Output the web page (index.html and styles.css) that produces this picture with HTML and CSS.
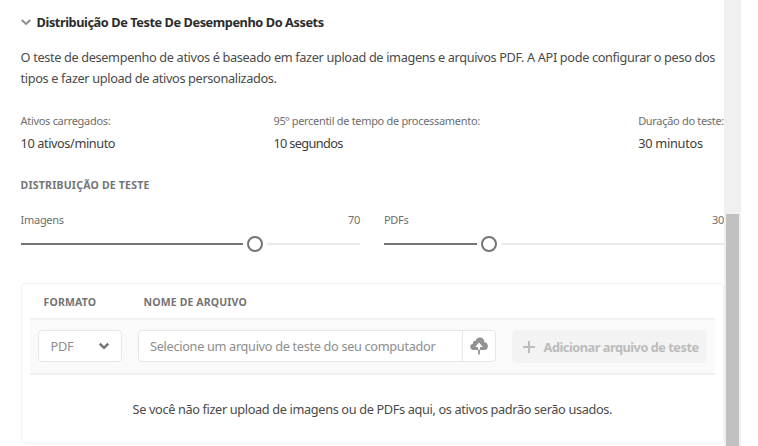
FILE: index.html
```html
<!DOCTYPE html>
<html lang="pt">
<head>
<meta charset="utf-8">
<title>Distribuição de teste</title>
<link rel="stylesheet" href="styles.css">
</head>
<body>
<div class="page">
  <main class="content">
    <h2 class="title">
      <svg class="title-icon" width="10" height="7" viewBox="0 0 10 7"><path d="M.7 1 5 5 9.300 1"/></svg>
      <span>Distribuição De Teste De Desempenho Do Assets</span>
    </h2>
    <p class="intro">O teste de desempenho de ativos é baseado em fazer upload de imagens e arquivos PDF. A API pode configurar o peso dos<br>tipos e fazer upload de ativos personalizados.</p>
    <dl class="stats">
      <div><dt>Ativos carregados:</dt><dd>10 ativos/minuto</dd></div>
      <div><dt>95º percentil de tempo de processamento:</dt><dd class="seconds">10 segundos</dd></div>
      <div><dt>Duração do teste:</dt><dd class="minutes">30 minutos</dd></div>
    </dl>
    <h3 class="heading">DISTRIBUIÇÃO DE TESTE</h3>
    <div class="sliders">
      <div class="slider">
        <div class="slider-label"><span>Imagens</span><span>70</span></div>
        <div class="track"><i class="fill" style="width:222px"></i><i class="handle"></i><i class="rest"></i></div>
      </div>
      <div class="slider">
        <div class="slider-label"><span>PDFs</span><span>30</span></div>
        <div class="track"><i class="fill" style="width:93px"></i><i class="handle"></i><i class="rest"></i></div>
      </div>
    </div>
    <section class="panel">
      <div class="columns heading"><span>FORMATO</span><span>NOME DE ARQUIVO</span></div>
      <div class="row">
        <div class="select"><span>PDF</span><svg width="12" height="8" viewBox="0 0 12 8"><path d="M1.7 1.6 6 5.8 10.3 1.6"/></svg></div>
        <div class="file">
          <span class="file-name">Selecione um arquivo de teste do seu computador</span>
          <span class="file-button">
            <svg width="18" height="18" viewBox="0 0 18 18"><path class="cloud" d="M4.2 13A3.6 3.6 0 0 1 .2 9.8C.2 8 1.5 6.8 3 6.7 2.7 4.700 4 3.500 5.700 3.700 6.300 1.700 7.900.6 9.900.6c2.600 0 4.600 2 4.400 4.700C16.500 5.200 17.900 7 17.900 9.200c0 2.200-1.400 3.800-3.500 3.800Z"/><path class="arrow" d="M9 5.600 5.200 10H8v3.500h2V10h2.800Z"/><path class="stem" d="M8.100 12.500h1.800v5H8.100z"/></svg>
          </span>
        </div>
        <div class="add"><svg width="12" height="12" viewBox="0 0 12 12"><path d="M6 0v12M0 6h12"/></svg><span>Adicionar arquivo de teste</span></div>
      </div>
      <p class="note">Se você não fizer upload de imagens ou de PDFs aqui, os ativos padrão serão usados.</p>
    </section>
  </main>
  <div class="scrollbar"><div class="thumb"></div></div>
</div>
</body>
</html>
```
FILE: styles.css
```css
* { box-sizing: border-box; }
body { margin: 0; background: #fff; color: #4b4b4b; font: 12.75px/21px "Noto Sans", sans-serif; letter-spacing: -.362px; font-variant-ligatures: none; overflow: hidden; }
h2, h3, p, dl, dd { margin: 0; }
svg { display: block; flex: none; }
.page { display: flex; height: 446px; }
.content { width: 724px; padding: 11px 0 0 20.6px; white-space: nowrap; overflow: hidden; }
.title { display: flex; align-items: center; gap: 6px; height: 22px; font-size: 12.75px; font-weight: 700; color: #2c2c2c; letter-spacing: -.43px; }
.title-icon path { fill: none; stroke: #8e8e8e; stroke-width: 2; }
.intro { margin-top: 14px; }
.stats { display: flex; justify-content: space-between; margin-top: 22px; }
.stats dt { font-size: 11px; line-height: 20px; letter-spacing: -.31px; color: #6e6e6e; }
.stats dd { margin: 2px 0 1px; line-height: 21px; color: #404040; letter-spacing: -.42px; }
.stats .seconds { letter-spacing: -.65px; }
.stats .minutes { letter-spacing: -.25px; }
.heading { font-size: 10.5px; line-height: 16px; font-weight: 700; letter-spacing: .22px; color: #747474; }
h3.heading { margin-top: 22px; }
.sliders { display: flex; gap: 24px; margin-top: 18px; }
.slider { flex: none; width: 339.4px; }
.slider + .slider { flex: 1; }
.slider-label { display: flex; justify-content: space-between; font-size: 11px; line-height: 18px; letter-spacing: -.3px; color: #6e6e6e; }
.track { display: flex; align-items: center; gap: 4px; height: 16px; margin-top: 6.5px; }
.fill { height: 2px; background: #747474; }
.handle { width: 16px; height: 16px; border: 2px solid #747474; border-radius: 50%; }
.rest { flex: 1; height: 2px; background: #eaeaea; }
.panel { height: 161px; margin-top: 31.5px; padding: 0 8px; border: 1px solid #f3f3f3; border-radius: 4px; }
.columns { display: flex; height: 34px; padding: 10px 0 0 14px; letter-spacing: .14px; }
.columns span:first-child { width: 100px; }
.row { display: flex; align-items: flex-start; height: 57px; padding: 10px 8px 0; background: #fafafa; border-top: 2px solid #f1f1f1; border-bottom: 2px solid #f1f1f1; }
.select, .file { display: flex; align-items: center; height: 32px; background: #fff; border: 1px solid #e7e7e7; border-radius: 4px; color: #8e8e8e; }
.select { width: 84px; justify-content: space-between; padding: 0 11px 0 12px; }
.select path { fill: none; stroke: #747474; stroke-width: 2.4; }
.file { width: 358px; margin-left: 16px; }
.file-name { flex: 1; padding-left: 11.5px; letter-spacing: -.33px; }
.file-button { display: flex; align-items: center; justify-content: center; width: 33px; height: 30px; border-left: 1px solid #e7e7e7; }
.cloud, .stem { fill: #929292; }
.arrow { fill: #fff; }
.add { display: flex; align-items: center; gap: 9px; width: 195px; height: 33px; margin-left: 16px; padding: 1px 0 0 11px; background: #f3f3f3; border-radius: 5px; color: #bcbcbc; font-weight: 700; letter-spacing: -.48px; }
.add path { fill: none; stroke: #bcbcbc; stroke-width: 2; }
.note { margin-top: 24px; text-align: center; }
.scrollbar { width: 17px; padding: 214px 2px 0; background: #f0f0f0; }
.thumb { height: 232px; background: #c1c1c1; }
```
